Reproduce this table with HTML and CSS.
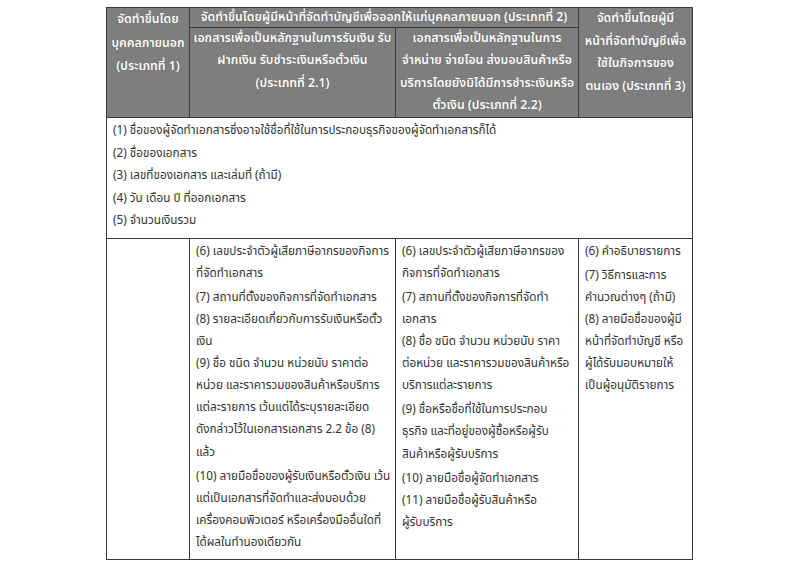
FILE: index.html
```html
<!DOCTYPE html>
<html lang="th">
<head>
<meta charset="utf-8">
<title>ตารางเอกสาร</title>
<link rel="stylesheet" href="styles.css">
</head>
<body>
<div class="page">
<table class="doc">
  <colgroup>
    <col class="c1"><col class="c2"><col class="c3"><col class="c4">
  </colgroup>
  <thead>
    <tr class="h1">
      <th rowspan="2" class="hcol1">จัดทำขึ้นโดย<br>บุคคลภายนอก<br>(ประเภทที่ 1)</th>
      <th colspan="2" class="hspan">จัดทำขึ้นโดยผู้มีหน้าที่จัดทำบัญชีเพื่อออกให้แก่บุคคลภายนอก (ประเภทที่ 2)</th>
      <th rowspan="2" class="hcol4">จัดทำขึ้นโดยผู้มี<br>หน้าที่จัดทำบัญชีเพื่อ<br>ใช้ในกิจการของ<br>ตนเอง (ประเภทที่ 3)</th>
    </tr>
    <tr class="h2">
      <th class="hsub">เอกสารเพื่อเป็นหลักฐานในการรับเงิน รับ<br>ฝากเงิน รับชำระเงินหรือตั๋วเงิน<br>(ประเภทที่ 2.1)</th>
      <th class="hsub">เอกสารเพื่อเป็นหลักฐานในการ<br>จำหน่าย จ่ายโอน ส่งมอบสินค้าหรือ<br>บริการโดยยังมิได้มีการชำระเงินหรือ<br>ตั๋วเงิน (ประเภทที่ 2.2)</th>
    </tr>
  </thead>
  <tbody>
    <tr>
      <td colspan="4" class="common">
        <div>(1) ชื่อของผู้จัดทำเอกสารซึ่งอาจใช้ชื่อที่ใช้ในการประกอบธุรกิจของผู้จัดทำเอกสารก็ได้</div>
        <div>(2) ชื่อของเอกสาร</div>
        <div>(3) เลขที่ของเอกสาร และเล่มที่ (ถ้ามี)</div>
        <div>(4) วัน เดือน ปี ที่ออกเอกสาร</div>
        <div>(5) จำนวนเงินรวม</div>
      </td>
    </tr>
    <tr class="detail">
      <td></td>
      <td>
        <div>(6) เลขประจำตัวผู้เสียภาษีอากรของกิจการ<br>ที่จัดทำเอกสาร</div>
        <div class="gap">(7) สถานที่ตั้งของกิจการที่จัดทำเอกสาร</div>
        <div>(8) รายละเอียดเกี่ยวกับการรับเงินหรือตั๋ว<br>เงิน</div>
        <div>(9) ชื่อ ชนิด จำนวน หน่วยนับ ราคาต่อ<br>หน่วย และราคารวมของสินค้าหรือบริการ<br>แต่ละรายการ เว้นแต่ได้ระบุรายละเอียด<br>ดังกล่าวไว้ในเอกสารเอกสาร 2.2 ข้อ (8)<br>แล้ว</div>
        <div class="gap">(10) ลายมือชื่อของผู้รับเงินหรือตั๋วเงิน เว้น<br>แต่เป็นเอกสารที่จัดทำและส่งมอบด้วย<br>เครื่องคอมพิวเตอร์ หรือเครื่องมืออื่นใดที่<br>ได้ผลในทำนองเดียวกัน</div>
      </td>
      <td>
        <div>(6) เลขประจำตัวผู้เสียภาษีอากรของ<br>กิจการที่จัดทำเอกสาร</div>
        <div class="gap">(7) สถานที่ตั้งของกิจการที่จัดทำ<br>เอกสาร</div>
        <div>(8) ชื่อ ชนิด จำนวน หน่วยนับ ราคา<br>ต่อหน่วย และราคารวมของสินค้าหรือ<br>บริการแต่ละรายการ</div>
        <div class="gap">(9) ชื่อหรือชื่อที่ใช้ในการประกอบ<br>ธุรกิจ และที่อยู่ของผู้ซื้อหรือผู้รับ<br>สินค้าหรือผู้รับบริการ</div>
        <div class="gap">(10) ลายมือชื่อผู้จัดทำเอกสาร</div>
        <div>(11) ลายมือชื่อผู้รับสินค้าหรือ<br>ผู้รับบริการ</div>
      </td>
      <td>
        <div>(6) คำอธิบายรายการ</div>
        <div class="gap">(7) วิธีการและการ<br>คำนวณต่างๆ (ถ้ามี)</div>
        <div>(8) ลายมือชื่อของผู้มี<br>หน้าที่จัดทำบัญชี หรือ<br>ผู้ได้รับมอบหมายให้<br>เป็นผู้อนุมัติรายการ</div>
      </td>
    </tr>
  </tbody>
</table>
</div>
</body>
</html>
```

FILE: styles.css
```css
html, body {
  margin: 0;
  padding: 0;
  background: #ffffff;
}

.page {
  padding: 7px 0 0 106px;
}

.doc {
  border-collapse: collapse;
  width: 586px;
  table-layout: fixed;
  font-family: "Noto Sans Thai", "Leelawadee UI", Tahoma, "Noto Sans", "DejaVu Sans", sans-serif;
  font-size: 11.75px;
  color: #333333;
  border: 1.5px solid #3a3a3a;
}

.c1 { width: 83px; }
.c2 { width: 206px; }
.c3 { width: 183px; }
.c4 { width: 114px; }

.doc th {
  background: #7e7e7e;
  color: #ffffff;
  font-size: 12.25px;
  font-weight: 600;
  border: 1.5px solid #3a3a3a;
  text-align: center;
  vertical-align: top;
  padding: 0 2px;
  text-shadow: 0 0 1px rgba(0,0,0,0.35);
  white-space: nowrap;
}

.h1 th { line-height: 19px; height: 19px; }
.hcol1 { line-height: 23.5px !important; padding-top: 0; }
.hcol4 { line-height: 22.5px !important; padding-top: 0; }
.h2 th { line-height: 22.3px; height: 89px; }

.doc td {
  border: 1.5px solid #3a3a3a;
  vertical-align: top;
  padding: 2px 6px 5px 6px;
  line-height: 22.5px;
  white-space: nowrap;
}

.common { padding-left: 6px; }

.detail td { line-height: 22.1px; }

.detail td div.gap { margin-top: 2px; }
```
